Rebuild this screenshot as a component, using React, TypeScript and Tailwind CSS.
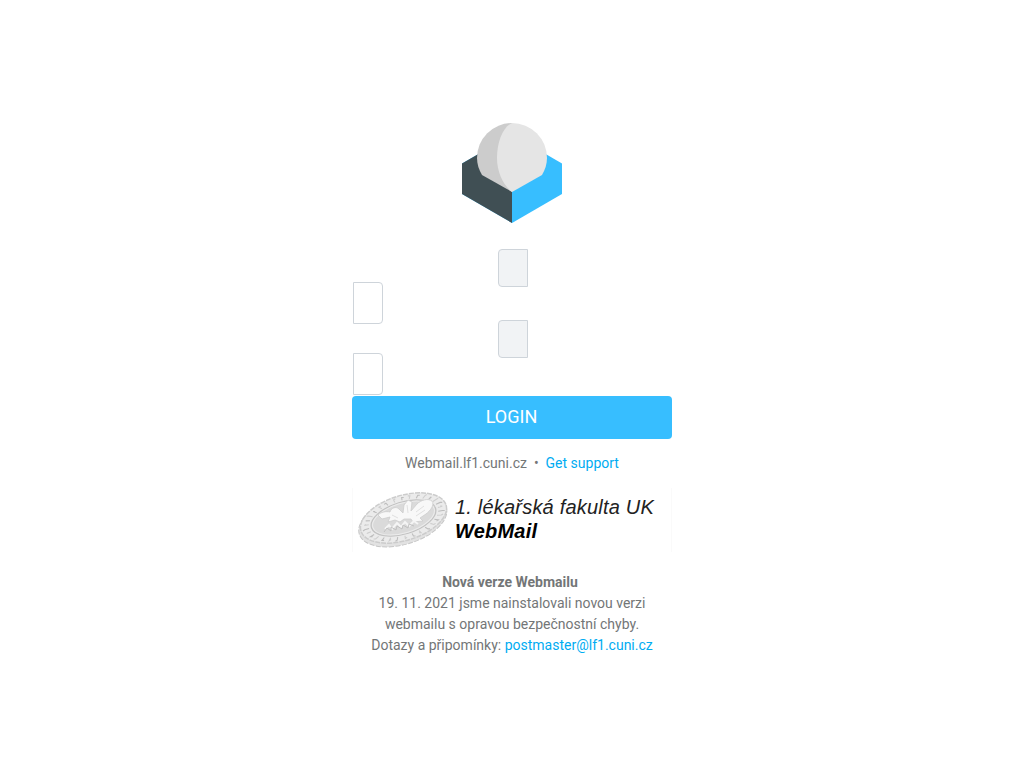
const marks = (n: number) => Array.from({ length: n }, (_, i) => i);

function Logo() {
  return (
    <svg className="block size-[100px]" viewBox="0 0 100 100">
      <path d="M0 40.5L50 11.5L100 40.5V71L50 100L0 71Z" fill="#37beff" />
      <path d="M0 40.5L50 11.5V100L0 71Z" fill="#404f54" />
      <path d="M50 0A35 35 0 0 0 15 35C15 41 17 47 20 52L50 69Z" fill="#ccc" />
      <path d="M50 0A35 35 0 0 1 85 35C85 41 83 47 80 52L50 69C41 62 35 49 35 35C35 19 41 4 50 0Z" fill="#e5e5e5" />
    </svg>
  );
}

function Seal() {
  return (
    <svg className="block h-[64px] w-[100px] shrink-0" viewBox="0 0 100 64" fill="none">
      <g transform="translate(49.5 30) rotate(-17)">
        <ellipse rx="45.5" ry="23.5" cx="-1.5" cy="2.5" fill="#e2e2e2" stroke="#c6c6c6" strokeDasharray="5 1.5" />
        <ellipse rx="44.5" ry="22.5" fill="#ebebeb" stroke="#cccccc" strokeWidth="1.5" strokeDasharray="5 1" />
        {marks(30).map((i) => {
          const a = (i * Math.PI * 2) / 30;
          const c = Math.cos(a);
          const s = Math.sin(a);
          return (
            <path
              key={i}
              d={`M${c * 36} ${s * 17.5}L${c * 40.5} ${s * 20.3}l${i % 3 ? 2 : -2} ${i % 2 ? 0.6 : -0.6}`}
              stroke={i % 2 ? "#bdbdbd" : "#cecece"}
              strokeWidth="1.1"
            />
          );
        })}
        <ellipse rx="33.5" ry="16" fill="#dadada" stroke="#c2c2c2" strokeWidth="1.2" />
        <ellipse rx="32" ry="14.8" stroke="#ececec" />
      </g>
      <path
        d="M24 27C27 24 32 23 36 24C37 20 42 18 45 21L49 25L50 17L54 12L58 14L57 23L63 16C67 12 74 10 78 13C81 17 76 23 72 26L66 30L69 33L59 34L57 31L50 31L46 34L41 32L34 34L36 29L28 31Z"
        fill="#f8f8f8"
        stroke="#cdcdcd"
        strokeWidth="0.8"
      />
      <path d="M38 27l6 3M62 24l8-6M62 28l9-6M53 17l1 8" stroke="#e0e0e0" />
      <path d="M31 41l4-4 3 4 5-6 4 4 4-5 4 4 5-5 4 3" stroke="#f5f5f5" strokeWidth="2" />
      <path d="M30 44l3-4 4 3v-4l5 3 1-4 5 3 1-4 5 3 1-4 5 2" stroke="#bdbdbd" strokeWidth="0.9" />
    </svg>
  );
}

function Field() {
  return (
    <div className="h-[71px]">
      <div className="ml-[146px] h-[38px] w-[30px] rounded-l border border-[#ced4da] bg-[#f1f3f5]" />
      <input className="mt-[-5px] ml-px block h-[42px] w-[30px] rounded-r border border-[#ced4da] bg-white outline-none" />
    </div>
  );
}

export default function App() {
  return (
    <main className="flex h-screen flex-col items-center overflow-hidden bg-white pt-[123px] font-['Roboto',sans-serif] text-[14px] leading-[21px] text-[#737677]">
      <Logo />
      <form className="mt-[26px] flex w-[320px] flex-col" onSubmit={(e) => e.preventDefault()}>
        <Field />
        <Field />
        <button className="mt-[5px] h-[43px] rounded bg-[#37beff] pr-px pb-[2px] text-[18px] text-white">LOGIN</button>
      </form>
      <div className="mt-[14px] flex whitespace-pre">
        <span>Webmail.lf1.cuni.cz</span>
        <span>{"  •  "}</span>
        <a className="text-[#00acf2]" href="#support">Get support</a>
      </div>
      <div className="mt-[14px] flex h-[64px] w-[320px] border-x border-[#fafafa] pl-px">
        <Seal />
        <div className="pt-[7px] pl-px font-['Liberation_Sans',sans-serif] text-[20px] leading-[24px] tracking-[0.2px] whitespace-nowrap text-[#222] italic">
          <div>1. lékařská fakulta UK</div>
          <div className="font-bold text-black">WebMail</div>
        </div>
      </div>
      <div className="mt-[20px] w-[320px] text-center">
        <div className="pr-1 font-bold">Nová verze Webmailu</div>
        <div>19. 11. 2021 jsme nainstalovali novou verzi</div>
        <div>webmailu s opravou bezpečnostní chyby.</div>
        <div>
          Dotazy a připomínky: <a className="text-[#00acf2]" href="#mail">postmaster@lf1.cuni.cz</a>
        </div>
      </div>
    </main>
  );
}
